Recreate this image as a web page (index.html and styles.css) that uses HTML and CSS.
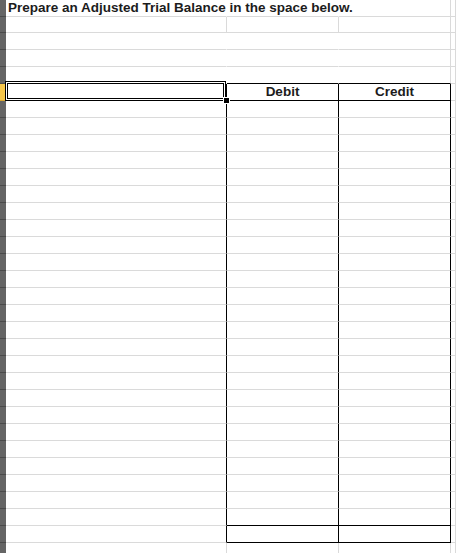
FILE: index.html
```html
<!DOCTYPE html>
<html lang="en">
  <head>
    <meta charset="UTF-8" />
    <meta name="viewport" content="width=device-width, initial-scale=1.0" />
    <title>Adjusted Trial Balance</title>
    <link rel="stylesheet" href="styles.css">
  </head>
  <body>
    <div class="sheet" id="sheet">
      <!-- Row 1: instructions -->
      <div class="row">
        <div class="rh"></div>
        <div class="cell no-r title">Prepare an Adjusted Trial Balance in the space below.</div>
        <div class="cell no-r"></div>
        <div class="cell"></div>
        <div class="cell"></div>
      </div>
      <div class="row short">
        <div class="rh"></div>
        <div class="cell"></div>
        <div class="cell"></div>
        <div class="cell"></div>
        <div class="cell"></div>
      </div>
      <div class="row">
        <div class="rh"></div>
        <div class="cell no-r"></div>
        <div class="cell no-r"></div>
        <div class="cell"></div>
        <div class="cell"></div>
      </div>
      <div class="row">
        <div class="rh"></div>
        <div class="cell no-r"></div>
        <div class="cell no-r"></div>
        <div class="cell"></div>
        <div class="cell"></div>
      </div>
      <div class="row">
        <div class="rh"></div>
        <div class="cell no-r"></div>
        <div class="cell no-r dark-b"></div>
        <div class="cell dark-b"></div>
        <div class="cell"></div>
      </div>

      <!-- Header row (A is the selected cell) -->
      <div class="row">
        <div class="rh active"></div>
        <div class="cell dark-r dark-b selected">
          <span class="sel"></span>
          <span class="handle"></span>
        </div>
        <div class="cell dark-r dark-b head">Debit</div>
        <div class="cell dark-r dark-b head">Credit</div>
        <div class="cell"></div>
      </div>

      <!-- body rows are added by the script below -->
    </div>

    <script>
      const sheet = document.getElementById("sheet");
      const bodyRows = 26;

      // Build the empty rows of the table, the total line and one row below it
      for (let i = 1; i <= bodyRows + 1; i++) {
        const row = document.createElement("div");
        row.className = "row";

        let a = "cell dark-r";
        let bc = "cell dark-r";
        if (i === bodyRows - 1 || i === bodyRows) bc += " dark-b";
        if (i > bodyRows) {
          a = "cell";
          bc = "cell";
        }

        row.innerHTML =
          '<div class="rh"></div>' +
          '<div class="' + a + '"></div>' +
          '<div class="' + bc + '"></div>' +
          '<div class="' + bc + '"></div>' +
          '<div class="cell"></div>';
        sheet.appendChild(row);
      }
    </script>
  </body>
</html>
```

FILE: styles.css
```css
body {
  margin: 0;
  background-color: white;
  font-family: "Liberation Sans", Arial, sans-serif;
  overflow: hidden;
}

.sheet {
  display: flex;
  flex-direction: column;
}

/* One spreadsheet row */
.row {
  display: grid;
  grid-template-columns: 6px 221px 112px 112px 1fr;
  height: 17px;
}

.row.short {
  height: 16px;
}

/* Row heading strip on the left */
.rh {
  background-color: #656565;
  border-bottom: 1px solid #4a4a4a;
}

.rh.active {
  background-color: #f6c74c;
  border-bottom-color: #d9a730;
}

/* Cells and gridlines */
.cell {
  box-sizing: border-box;
  border-right: 1px solid #dadada;
  border-bottom: 1px solid #dadada;
  font-size: 13.5px;
  font-weight: bold;
  line-height: 16px;
  color: #1c1c1c;
  white-space: nowrap;
}

.cell.no-r {
  border-right-color: transparent;
}

.cell.dark-r {
  border-right-color: #000;
}

.cell.dark-b {
  border-bottom-color: #000;
}

.title {
  padding-left: 2px;
  overflow: visible;
}

.head {
  text-align: center;
}

/* Selected cell outline with the fill handle */
.selected {
  position: relative;
  border-right-color: #000;
}

.sel {
  position: absolute;
  left: -1px;
  top: -3px;
  width: 221px;
  height: 20px;
  box-sizing: border-box;
  border: 1px solid #000;
  box-shadow: inset 0 0 0 1px #fff, inset 0 0 0 2px #000;
}

.handle {
  position: absolute;
  left: 217px;
  top: 13px;
  width: 7px;
  height: 7px;
  box-sizing: border-box;
  background-color: #000;
  border: 1px solid #fff;
  z-index: 2;
}
```
